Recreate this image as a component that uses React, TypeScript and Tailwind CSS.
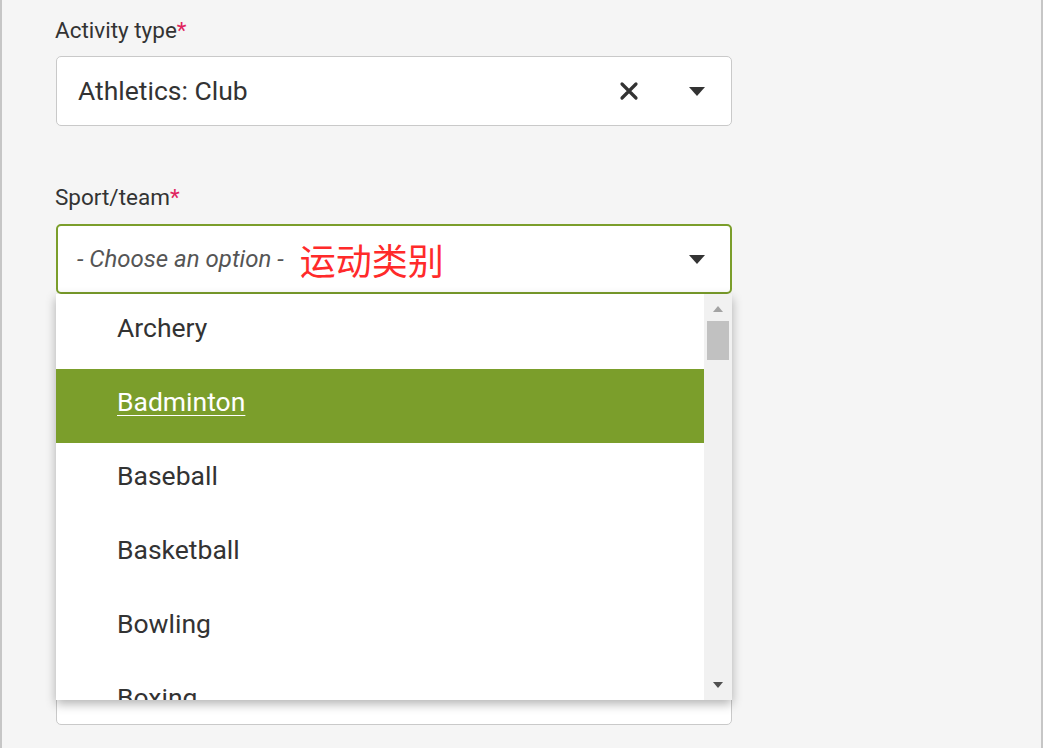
import React from "react";

const sports = ["Archery", "Badminton", "Baseball", "Basketball", "Bowling", "Boxing"];

const Caret = () => (
  <svg width="16" height="9" viewBox="0 0 16 9" className="fill-[#333]">
    <path d="M0 0h16L8 9z" />
  </svg>
);

const ClearIcon = () => (
  <svg width="20" height="20" viewBox="0 0 20 20" className="stroke-[#333]" strokeWidth="3.2" strokeLinecap="round">
    <path d="M3 3l14 14M17 3L3 17" />
  </svg>
);

const Label = ({ text }: { text: string }) => (
  <p className="-ml-px text-[22.5px] leading-6 text-[#333]">
    {text}
    <span className="text-[#e0245e]">*</span>
  </p>
);

const SportList = () => {
  return (
    <div className="absolute left-0 top-[70px] z-10 flex h-[406px] w-[676px] bg-white shadow-[0_4px_10px_rgba(0,0,0,0.3)]">
      <ul className="flex-1 overflow-hidden pt-px">
        {sports.map((s) => (
          <li
            key={s}
            className={
              s === "Badminton"
                ? "flex h-[74px] items-center bg-[#7b9e2b] pl-[61px] pb-2 text-[26.5px] text-white underline underline-offset-4 decoration-1"
                : "flex h-[74px] items-center pl-[61px] pb-2 text-[26.5px] text-[#333]"
            }
          >
            {s}
          </li>
        ))}
      </ul>
      <div className="flex w-[28px] flex-col items-center bg-[#f1f1f1]">
        <svg width="10" height="6" viewBox="0 0 10 6" className="mt-[12px] fill-[#a3a3a3]">
          <path d="M0 6h10L5 0z" />
        </svg>
        <div className="mt-[9px] h-[39px] w-[22px] bg-[#c1c1c1]" />
        <div className="flex-1" />
        <svg width="10" height="6" viewBox="0 0 10 6" className="mb-[12px] fill-[#505050]">
          <path d="M0 0h10L5 6z" />
        </svg>
      </div>
    </div>
  );
};

export default function App() {
  return (
    <div
      className="h-[748px] w-[1043px] overflow-hidden border-x-2 border-[#c6c6c6] bg-[#f5f5f5] pl-[54px]"
      style={{ fontFamily: "Roboto, 'Noto Sans CJK SC', sans-serif" }}
    >
      <div className="w-[676px] pt-[18px]">
        <Label text="Activity type" />
        <div className="mt-[14px] flex h-[70px] items-center rounded-[5px] border border-[#c9c9c9] bg-white pl-[21px] pr-[26px]">
          <span className="flex-1 text-[26.5px] text-[#333]">Athletics: Club</span>
          <ClearIcon />
          <span className="ml-[50px]">
            <Caret />
          </span>
        </div>

        <div className="mt-[59px]">
          <Label text="Sport/team" />
        </div>
        <div className="relative mt-[15px]">
          <div className="flex h-[70px] items-center rounded-[5px] border-2 border-[#7b9e2b] bg-white pl-[19px] pr-[25px]">
            <span className="text-[24px] italic text-[#555]">- Choose an option -</span>
            <span className="ml-[16px] flex-1 text-[36px] text-[#ff2a2a]" style={{ fontFamily: "'Noto Sans CJK SC', sans-serif" }}>
              运动类别
            </span>
            <Caret />
          </div>
          <SportList />
        </div>

        <div className="mt-[361px] h-[70px] rounded-[5px] border border-[#c9c9c9] bg-white" />
      </div>
    </div>
  );
}
